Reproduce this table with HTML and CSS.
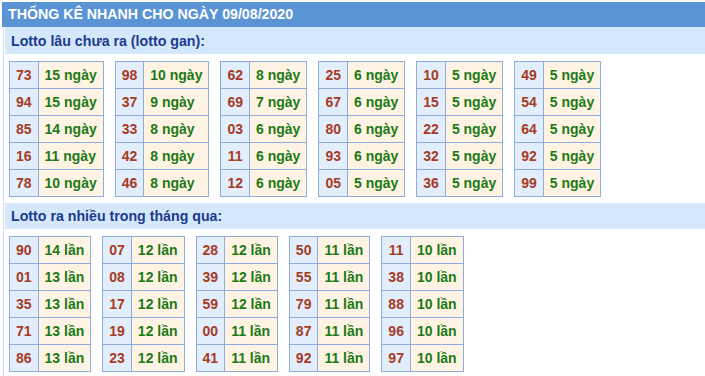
FILE: index.html
```html
<!DOCTYPE html>
<html lang="vi">
<head>
<meta charset="utf-8">
<title>Thống kê nhanh</title>
<link rel="stylesheet" href="styles.css">
</head>
<body>
<div class="panel">
  <div class="title">THỐNG KÊ NHANH CHO NGÀY 09/08/2020</div>
  <div class="content">
    <div class="sub first">Lotto lâu chưa ra (lotto gan):</div>
    <div class="tables">
      <table class="stat"><tr><td class="n">73</td><td class="v">15 ngày</td></tr><tr><td class="n">94</td><td class="v">15 ngày</td></tr><tr><td class="n">85</td><td class="v">14 ngày</td></tr><tr><td class="n">16</td><td class="v">11 ngày</td></tr><tr><td class="n">78</td><td class="v">10 ngày</td></tr></table>
      <table class="stat"><tr><td class="n">98</td><td class="v">10 ngày</td></tr><tr><td class="n">37</td><td class="v">9 ngày</td></tr><tr><td class="n">33</td><td class="v">8 ngày</td></tr><tr><td class="n">42</td><td class="v">8 ngày</td></tr><tr><td class="n">46</td><td class="v">8 ngày</td></tr></table>
      <table class="stat"><tr><td class="n">62</td><td class="v">8 ngày</td></tr><tr><td class="n">69</td><td class="v">7 ngày</td></tr><tr><td class="n">03</td><td class="v">6 ngày</td></tr><tr><td class="n">11</td><td class="v">6 ngày</td></tr><tr><td class="n">12</td><td class="v">6 ngày</td></tr></table>
      <table class="stat"><tr><td class="n">25</td><td class="v">6 ngày</td></tr><tr><td class="n">67</td><td class="v">6 ngày</td></tr><tr><td class="n">80</td><td class="v">6 ngày</td></tr><tr><td class="n">93</td><td class="v">6 ngày</td></tr><tr><td class="n">05</td><td class="v">5 ngày</td></tr></table>
      <table class="stat"><tr><td class="n">10</td><td class="v">5 ngày</td></tr><tr><td class="n">15</td><td class="v">5 ngày</td></tr><tr><td class="n">22</td><td class="v">5 ngày</td></tr><tr><td class="n">32</td><td class="v">5 ngày</td></tr><tr><td class="n">36</td><td class="v">5 ngày</td></tr></table>
      <table class="stat"><tr><td class="n">49</td><td class="v">5 ngày</td></tr><tr><td class="n">54</td><td class="v">5 ngày</td></tr><tr><td class="n">64</td><td class="v">5 ngày</td></tr><tr><td class="n">92</td><td class="v">5 ngày</td></tr><tr><td class="n">99</td><td class="v">5 ngày</td></tr></table>
    </div>
    <div class="sub">Lotto ra nhiều trong tháng qua:</div>
    <div class="tables">
      <table class="stat"><tr><td class="n">90</td><td class="v">14 lần</td></tr><tr><td class="n">01</td><td class="v">13 lần</td></tr><tr><td class="n">35</td><td class="v">13 lần</td></tr><tr><td class="n">71</td><td class="v">13 lần</td></tr><tr><td class="n">86</td><td class="v">13 lần</td></tr></table>
      <table class="stat"><tr><td class="n">07</td><td class="v">12 lần</td></tr><tr><td class="n">08</td><td class="v">12 lần</td></tr><tr><td class="n">17</td><td class="v">12 lần</td></tr><tr><td class="n">19</td><td class="v">12 lần</td></tr><tr><td class="n">23</td><td class="v">12 lần</td></tr></table>
      <table class="stat"><tr><td class="n">28</td><td class="v">12 lần</td></tr><tr><td class="n">39</td><td class="v">12 lần</td></tr><tr><td class="n">59</td><td class="v">12 lần</td></tr><tr><td class="n">00</td><td class="v">11 lần</td></tr><tr><td class="n">41</td><td class="v">11 lần</td></tr></table>
      <table class="stat"><tr><td class="n">50</td><td class="v">11 lần</td></tr><tr><td class="n">55</td><td class="v">11 lần</td></tr><tr><td class="n">79</td><td class="v">11 lần</td></tr><tr><td class="n">87</td><td class="v">11 lần</td></tr><tr><td class="n">92</td><td class="v">11 lần</td></tr></table>
      <table class="stat"><tr><td class="n">11</td><td class="v">10 lần</td></tr><tr><td class="n">38</td><td class="v">10 lần</td></tr><tr><td class="n">88</td><td class="v">10 lần</td></tr><tr><td class="n">96</td><td class="v">10 lần</td></tr><tr><td class="n">97</td><td class="v">10 lần</td></tr></table>
    </div>
  </div>
</div>
</body>
</html>
```
FILE: styles.css
```css
html, body {
  margin: 0;
  padding: 0;
  background: #ffffff;
}
body {
  font-family: "Liberation Sans", Arial, sans-serif;
  font-weight: bold;
  font-size: 14px;
}
.panel {
  margin: 2px 0 0 2px;
}
.title {
  background: #5b94d5;
  color: #ffffff;
  height: 25px;
  line-height: 25px;
  padding-left: 6px;
  font-size: 14.2px;
}
.content {
  margin-left: 1px;
  border-left: 1px solid #c9dbf1;
  padding-left: 1px;
  min-height: 360px;
}
.sub {
  background: #d5e7fb;
  color: #1b3b8f;
  height: 26px;
  line-height: 27px;
  padding-left: 6px;
  font-size: 14.2px;
}
.sub.first {
  height: 27px;
  line-height: 28px;
}
.tables {
  display: flex;
  gap: 11px;
  padding: 7px 0 6px 4px;
}
.stat {
  border-collapse: collapse;
}
.stat td {
  border: 1px solid #8eacdc;
  height: 27px;
  padding: 0 6px;
  box-sizing: border-box;
  line-height: 16px;
  font-size: 14px;
  white-space: nowrap;
}
.stat td.n {
  background: #e3eefc;
  color: #a63b26;
  text-align: center;
}
.stat td.v {
  background: #fff4e4;
  color: #1c7a16;
}
```
